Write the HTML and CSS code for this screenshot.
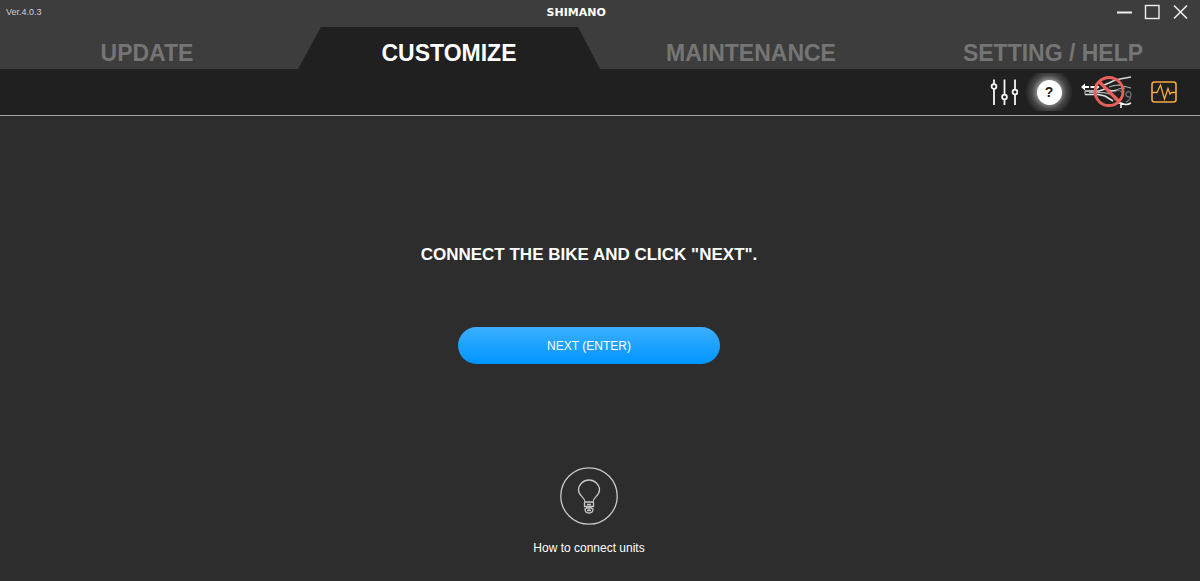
FILE: index.html
```html
<!DOCTYPE html>
<html lang="en">
<head>
<meta charset="utf-8">
<title>Customize</title>
<link rel="stylesheet" href="styles.css">
</head>
<body>
<header class="header">
  <div class="titlebar">
    <span class="version">Ver.4.0.3</span>
    <span class="brand">SHIMANO</span>
    <div class="window-controls">
      <button class="icon-button" aria-label="Minimize"><svg width="16" height="16" viewBox="0 0 16 16"><path d="M1 8.500H16" stroke="#f0f0f0" stroke-width="2"/></svg></button>
      <button class="icon-button" aria-label="Maximize"><svg width="16" height="16" viewBox="0 0 16 16"><rect x="1.500" y="1.500" width="13.500" height="13" fill="none" stroke="#eee" stroke-width="1.400"/></svg></button>
      <button class="icon-button" aria-label="Close"><svg width="16" height="16" viewBox="0 0 16 16"><path d="M2 1.500L15 14.500M15 1.500L2 14.500" stroke="#e8e8e8" stroke-width="1.700"/></svg></button>
    </div>
  </div>
  <nav class="tabs">
    <a class="tab" href="#update">UPDATE</a>
    <a class="tab tab-active" href="#customize" aria-current="page">CUSTOMIZE</a>
    <a class="tab" href="#maintenance">MAINTENANCE</a>
    <a class="tab" href="#setting">SETTING / HELP</a>
  </nav>
</header>
<div class="toolbar">
  <button class="icon-button" aria-label="Adjust">
    <svg width="28" height="28" viewBox="0 0 28 28" fill="#202020" stroke="#f4f4f4" stroke-width="1.800"><path d="M4 1.500V27M14.500 1.500V27M25 1.500V27"/><circle cx="4" cy="8.500" r="2.400"/><circle cx="14.500" cy="19" r="2.400"/><circle cx="25" cy="14" r="2.400"/></svg>
  </button>
  <button class="help-button" aria-label="Help"><span class="help-mark">?</span></button>
  <button class="icon-button" aria-label="Shifting disabled">
    <svg width="54" height="36" viewBox="0 0 54 36" fill="none">
      <g stroke-width="1.200" stroke-linejoin="round">
        <path d="M24 11L29 9Q34 6 40 5L51 3" stroke="#d8d8d8" stroke-width="1.500"/>
        <path d="M29 13Q37 10 43 12L51 14M38 15L45 14" stroke="#aaa"/>
        <path d="M5 17H19L25 15L32 17L38 16M5 20.500H18L25 22L33 27" stroke="#e0e0e0" stroke-width="1.500"/>
        <path d="M5 17V20.500M9 18.700H24L34 21" stroke="#aaa"/>
        <path d="M34 18Q38 15 42 18Q44 22 40 25Q37 27 34 25M46 19Q50 16 51 20Q51 26 46 28M46 19Q45 23 50 23" stroke="#777"/>
        <path d="M38 29H41V34M41 29Q46 32 51 29" stroke="#f2f2f2" stroke-width="1.600"/>
      </g>
      <path d="M1 13L5 9.500V12H9V14H5V16.500ZM19.500 13L15.500 9.500V12H10.500V14H15.500V16.500Z" fill="#fff"/>
      <circle cx="29" cy="17.500" r="14" stroke="#e8605a" stroke-width="2.800"/>
      <path d="M19 7.500L39 27.500" stroke="#e8605a" stroke-width="3.200"/>
    </svg>
  </button>
  <button class="icon-button icon-monitor" aria-label="Diagnostics">
    <svg width="26" height="22" viewBox="0 0 26 22" fill="none" stroke="#f5a842"><rect x="1" y="1" width="24" height="20" rx="2.500" stroke-width="1.600"/><path d="M1 11.500H6L9.500 4L13.500 18L17 7.500L19 13L20.500 11.500H25" stroke-width="1.300"/></svg>
  </button>
</div>
<main class="content">
  <h1 class="heading">CONNECT THE BIKE AND CLICK "NEXT".</h1>
  <button class="next-button">NEXT (ENTER)</button>
  <a class="guide" href="#connect">
    <svg width="58" height="58" viewBox="0 0 58 58" fill="none" stroke="#c8c8c8" stroke-width="1.300"><circle cx="29" cy="29" r="28.200"/><path d="M25 35C25 30 18.500 29 18.500 23A10.500 10 0 0 1 39.500 23C39.500 29 33 30 33 35ZM24.500 35V39.500H33.500V35M26 39.500L27.500 41L25 42Q25 46 29 46Q33 46 33 42L30.500 41L32 39.500M27 37.500H31M29 40V43.500H27M29 43.500H31"/></svg>
    <span>How to connect units</span>
  </a>
</main>
</body>
</html>
```
FILE: styles.css
```css
* {
  box-sizing: border-box;
}

body {
  margin: 0;
  min-height: 100vh;
  background: #2d2d2d;
  color: #fff;
  font-family: "Liberation Sans", Arial, sans-serif;
}

button {
  padding: 0;
  border: 0;
  background: none;
  color: inherit;
  font-family: inherit;
}

a {
  color: inherit;
  text-decoration: none;
}

svg {
  display: block;
}

.header {
  overflow: hidden;
  background: #3d3d3d;
}

.titlebar {
  display: grid;
  grid-template-columns: 13fr auto 14fr;
  align-items: center;
  height: 27px;
  padding: 0 12px 3px 6px;
}

.version {
  color: #d0d0d0;
  font-size: 9px;
}

.brand {
  font: bold 11px "DejaVu Sans", sans-serif;
}

.window-controls {
  display: flex;
  justify-content: flex-end;
  gap: 12px;
}

.tabs {
  display: grid;
  grid-template-columns: repeat(4, 1fr);
  margin: 0 -4px;
}

.tab {
  height: 42px;
  padding-top: 9px;
  color: #757575;
  font-size: 23px;
  font-weight: bold;
  line-height: 34px;
  text-align: center;
}

.tab-active {
  background: #202020;
  color: #fff;
  clip-path: polygon(23px 0, calc(100% - 22px) 0, 100% 100%, 0 100%);
}

.toolbar {
  display: flex;
  justify-content: flex-end;
  align-items: center;
  height: 47px;
  padding-right: 23px;
  border-bottom: 1px solid #a8a8a8;
  background: #202020;
}

.help-button {
  display: grid;
  place-items: center;
  width: 46px;
  height: 38px;
  margin: 0 8px;
  background: radial-gradient(circle, #888 12px, #484848 17px, #202020 24px);
}

.help-mark {
  width: 25px;
  height: 25px;
  border-radius: 50%;
  background: #fff;
  color: #222;
  font-size: 14px;
  font-weight: bold;
  line-height: 25px;
}

.icon-monitor {
  margin-left: 17px;
}

.content {
  display: flex;
  flex-direction: column;
  align-items: center;
  padding: 129px 22px 24px 0;
}

.heading {
  margin: 0;
  font-size: 17px;
  line-height: 20px;
}

.next-button {
  width: 262px;
  height: 37px;
  margin: 62px 0 103px;
  border-radius: 19px;
  background: linear-gradient(#3cafff, #0095ff);
  font-size: 12px;
}

.guide {
  display: flex;
  flex-direction: column;
  align-items: center;
  gap: 16px;
  font-size: 12px;
  line-height: 14px;
}
```
